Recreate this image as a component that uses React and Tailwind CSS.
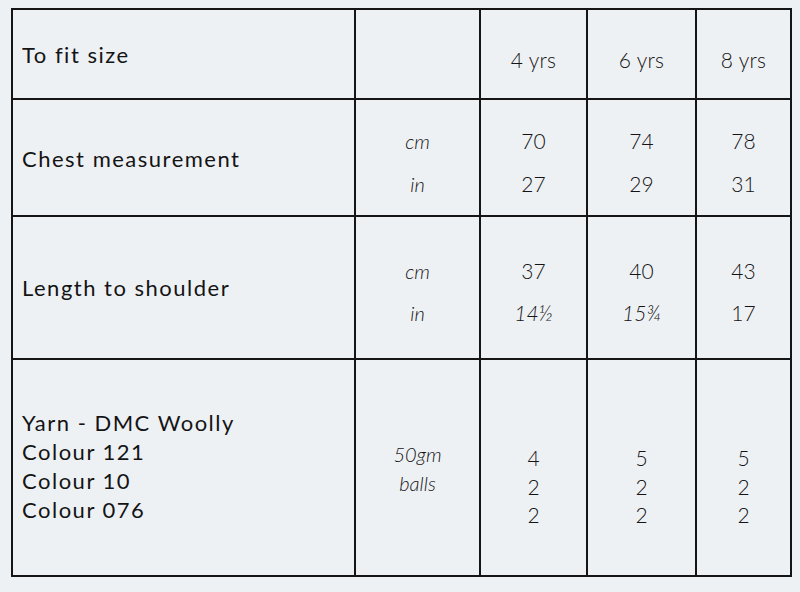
import React from 'react';

const sizes = ['4 yrs', '6 yrs', '8 yrs'];
const chest = [['70', '27'], ['74', '29'], ['78', '31']];
const length = [['37', '14½'], ['40', '15¾'], ['43', '17']];
const yarn = [['4', '2', '2'], ['5', '2', '2'], ['5', '2', '2']];

function Cell({ className = '', children }) {
  return <div className={`bg-[#eef1f4] ${className}`}>{children}</div>;
}

export default function App() {
  return (
    <div
      className="w-[800px] h-[592px] bg-[#eef1f4] pt-[8px] pl-[11px] text-[#141414]"
      style={{ fontFamily: 'Lato, "Noto Sans", sans-serif' }}
    >
      <div className="grid w-[781px] grid-cols-[341px_123px_105px_107px_93px] grid-rows-[88px_115px_141px_215px] gap-[2px] bg-[#151515] p-[2px]">
        {/* Row 1 */}
        <Cell className="flex items-center pl-[9px]">
          <span className="text-[22px] font-normal tracking-[1.5px]">To fit size</span>
        </Cell>
        <Cell />
        {sizes.map((s) => (
          <Cell key={s} className="flex items-center justify-center pt-[12px]">
            <span className="text-[21px] font-light tracking-[0.3px]">{s}</span>
          </Cell>
        ))}

        {/* Row 2 */}
        <Cell className="flex items-center pl-[9px] pt-[2px]">
          <span className="text-[22px] font-normal tracking-[1.5px]">Chest measurement</span>
        </Cell>
        <Cell className="flex flex-col items-center pt-[20px] text-[20px] italic font-light leading-[43px]">
          <span>cm</span>
          <span>in</span>
        </Cell>
        {chest.map((v, i) => (
          <Cell key={i} className="flex flex-col items-center pt-[19px] text-[21px] font-light leading-[43px]">
            <span>{v[0]}</span>
            <span>{v[1]}</span>
          </Cell>
        ))}

        {/* Row 3 */}
        <Cell className="flex items-center pl-[9px]">
          <span className="text-[22px] font-normal tracking-[1.5px]">Length to shoulder</span>
        </Cell>
        <Cell className="flex flex-col items-center pt-[33px] text-[20px] italic font-light leading-[42px]">
          <span>cm</span>
          <span>in</span>
        </Cell>
        {length.map((v, i) => (
          <Cell key={i} className="flex flex-col items-center pt-[33px] text-[21px] font-light leading-[42px]">
            <span>{v[0]}</span>
            <span className={i < 2 ? 'italic' : ''}>{v[1]}</span>
          </Cell>
        ))}

        {/* Row 4 */}
        <Cell className="flex flex-col pl-[9px] pt-[48px] text-[22px] font-normal leading-[29px] tracking-[1.5px]">
          <span>Yarn - DMC Woolly</span>
          <span>Colour 121</span>
          <span>Colour 10</span>
          <span>Colour 076</span>
        </Cell>
        <Cell className="flex flex-col items-center pt-[80px] text-[20px] italic font-light leading-[29px]">
          <span>50gm</span>
          <span>balls</span>
        </Cell>
        {yarn.map((v, i) => (
          <Cell key={i} className="flex flex-col items-center pt-[84px] text-[21px] font-light leading-[28.5px]">
            {v.map((n, j) => (
              <span key={j}>{n}</span>
            ))}
          </Cell>
        ))}
      </div>
    </div>
  );
}
